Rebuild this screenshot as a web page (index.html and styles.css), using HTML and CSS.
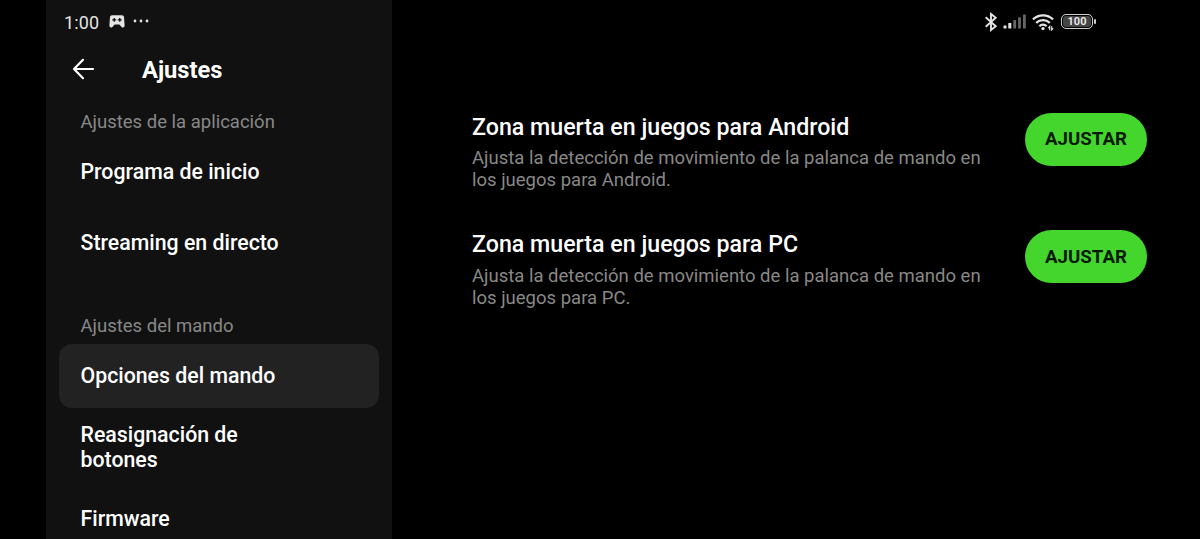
FILE: index.html
```
<!DOCTYPE html>
<html lang="es">
<head>
  <meta charset="UTF-8" />
  <meta name="viewport" content="width=device-width, initial-scale=1.0"/>
  <title>Ajustes</title>
  <link rel="stylesheet" href="styles.css">
</head>
<body>

  <aside class="sidebar">
    <div class="status">
      <span class="clock">1:00</span>
      <svg class="gamepad" width="16" height="13" viewBox="0 0 16 13">
        <path fill="#e4e4e4" fill-rule="evenodd" d="M3 0.300h10c1.200 0 1.800 0.700 2 1.800l0.600 8.200c0.200 2.300-1.800 2.900-3 1.700L10.300 9.400H5.700L3.400 12C2.200 13.200 0.200 12.600 0.400 10.300L1 2.100C1.200 1 1.800 0.300 3 0.300zM4.600 2.900v1.300H3.300v1.300h1.300v1.300h1.300V5.500h1.300V4.200H5.900V2.900zM10.100 2.900v1.300H8.800v1.300h1.300v1.300h1.300V5.500h1.300V4.200h-1.300V2.900z"/>
      </svg>
      <svg class="dots" width="16" height="4" viewBox="0 0 16 4" fill="#e4e4e4">
        <circle cx="2" cy="2" r="1.400"/>
        <circle cx="8" cy="2" r="1.400"/>
        <circle cx="14" cy="2" r="1.400"/>
      </svg>
    </div>

    <header>
      <svg width="24" height="24" viewBox="0 0 24 24" fill="none" stroke="#fff" stroke-width="2.200" stroke-linecap="round" stroke-linejoin="round">
        <path d="M22 12H3M12 2.800L3 12l9 9.200"/>
      </svg>
      <h1>Ajustes</h1>
    </header>

    <nav>
      <h2>Ajustes de la aplicación</h2>
      <a href="#"><span>Programa de inicio</span></a>
      <a href="#"><span>Streaming en directo</span></a>
      <h2 class="second">Ajustes del mando</h2>
      <a href="#" class="active"><span>Opciones del mando</span></a>
      <a href="#"><span>Reasignación de botones</span></a>
      <a href="#"><span>Firmware</span></a>
    </nav>
  </aside>

  <main>
    <div class="status icons">
      <svg class="bluetooth" width="14" height="20" viewBox="0 0 14 20" fill="none" stroke="#e4e4e4" stroke-width="1.900">
        <path d="M1.700 5.300l10 9L7 18V2l4.700 3.700-10 9"/>
      </svg>
      <svg class="signal" width="24" height="15" viewBox="0 0 24 15">
        <g fill="#e4e4e4">
          <rect x="0.500" y="11.500" width="3" height="3" rx="0.500"/>
          <rect x="5.300" y="9" width="3" height="5.500" rx="0.500"/>
        </g>
        <g fill="#666">
          <rect x="10.300" y="6" width="2.800" height="8.500" rx="0.500"/>
          <rect x="15.100" y="3.200" width="2.800" height="11.300" rx="0.500"/>
          <rect x="20" y="0.500" width="2.800" height="14" rx="0.500"/>
        </g>
      </svg>
      <svg class="wifi" width="23" height="18" viewBox="0 0 23 18" fill="none" stroke="#e4e4e4" stroke-width="2.300">
        <path d="M1 6.400a14.500 14.500 0 0 1 20 0M4.200 9.900a9.800 9.800 0 0 1 13.600 0M7.400 13.200a5 5 0 0 1 7.200 0"/>
        <circle cx="11" cy="15.600" r="1.700" fill="#e4e4e4" stroke="none"/>
        <path stroke-width="1.200" d="M17.700 17.200v-3.700l-1.500 1.600M19.700 13.200v3.700l1.500-1.600"/>
      </svg>
      <div class="battery">100</div>
    </div>

    <section>
      <div class="text">
        <h3>Zona muerta en juegos para Android</h3>
        <p>Ajusta la detección de movimiento de la palanca de mando en los juegos para Android.</p>
      </div>
      <button>AJUSTAR</button>
    </section>

    <section>
      <div class="text">
        <h3>Zona muerta en juegos para PC</h3>
        <p>Ajusta la detección de movimiento de la palanca de mando en los juegos para PC.</p>
      </div>
      <button>AJUSTAR</button>
    </section>
  </main>

</body>
</html>
```
FILE: styles.css
```
* {
  box-sizing: border-box;
}

body {
  margin: 0;
  padding-left: 46px;
  height: 539px;
  display: flex;
  overflow: hidden;
  background: #000;
  color: #fff;
  font-family: Roboto, sans-serif;
}

h1, h2, h3, p {
  margin: 0;
}

.sidebar {
  width: 346px;
  flex-shrink: 0;
  background: #111;
  overflow: hidden;
}

.status {
  height: 44px;
  display: flex;
  align-items: center;
}

.sidebar .status {
  padding-left: 18px;
}

.clock {
  width: 45px;
  color: #e4e4e4;
  font-size: 18px;
  letter-spacing: 0.1px;
}

.gamepad,
.dots {
  margin-bottom: 2px;
}

.dots {
  margin-left: 8px;
}

header {
  height: 52px;
  padding-left: 25px;
  display: flex;
  align-items: center;
}

header svg {
  margin-bottom: 2px;
}

h1 {
  margin-left: 47px;
  font-size: 23.7px;
  font-weight: 700;
}

nav {
  padding: 12px 13px 0;
}

h2 {
  height: 32px;
  padding-left: 21.5px;
  color: #888;
  font-size: 18.5px;
  font-weight: 400;
  line-height: 28px;
}

h2.second {
  margin-top: 36.5px;
}

nav a {
  height: 64px;
  margin-bottom: 7.5px;
  padding: 0 0 2px 21.5px;
  display: flex;
  align-items: center;
  border-radius: 13px;
  color: #fff;
  font-size: 21.3px;
  font-weight: 500;
  line-height: 25px;
  text-decoration: none;
}

nav a span {
  max-width: 210px;
}

nav a.active {
  background: #222;
}

main {
  flex: 1;
  padding: 0 53px 0 80px;
}

.icons {
  height: 43px;
  justify-content: flex-end;
  margin-right: 54px;
  margin-bottom: 69.5px;
}

.signal {
  margin-left: 5px;
}

.wifi {
  margin-left: 5px;
}

.battery {
  position: relative;
  width: 32px;
  height: 15px;
  margin-left: 6px;
  border: 1.5px solid #ccc;
  border-radius: 5px;
  background: #444;
  box-shadow: inset 0 0 0 1px #000;
  color: #eee;
  font-size: 11px;
  font-weight: 600;
  line-height: 13px;
  text-align: center;
}

/* battery tip */
.battery::after {
  content: "";
  position: absolute;
  right: -4px;
  top: 4px;
  width: 2px;
  height: 5px;
  border-radius: 1px;
  background: #ccc;
}

section {
  height: 117.5px;
  display: flex;
  justify-content: space-between;
  align-items: flex-start;
}

.text {
  width: 520px;
}

h3 {
  font-size: 23.2px;
  font-weight: 500;
  line-height: 28px;
}

p {
  margin-top: 6.8px;
  color: #888;
  font-size: 18.5px;
  line-height: 22px;
}

button {
  width: 122px;
  height: 53px;
  padding: 0;
  border: none;
  border-radius: 27px;
  background: #44d62c;
  color: #051a02;
  font-family: inherit;
  font-size: 18.7px;
  font-weight: 700;
}
```
